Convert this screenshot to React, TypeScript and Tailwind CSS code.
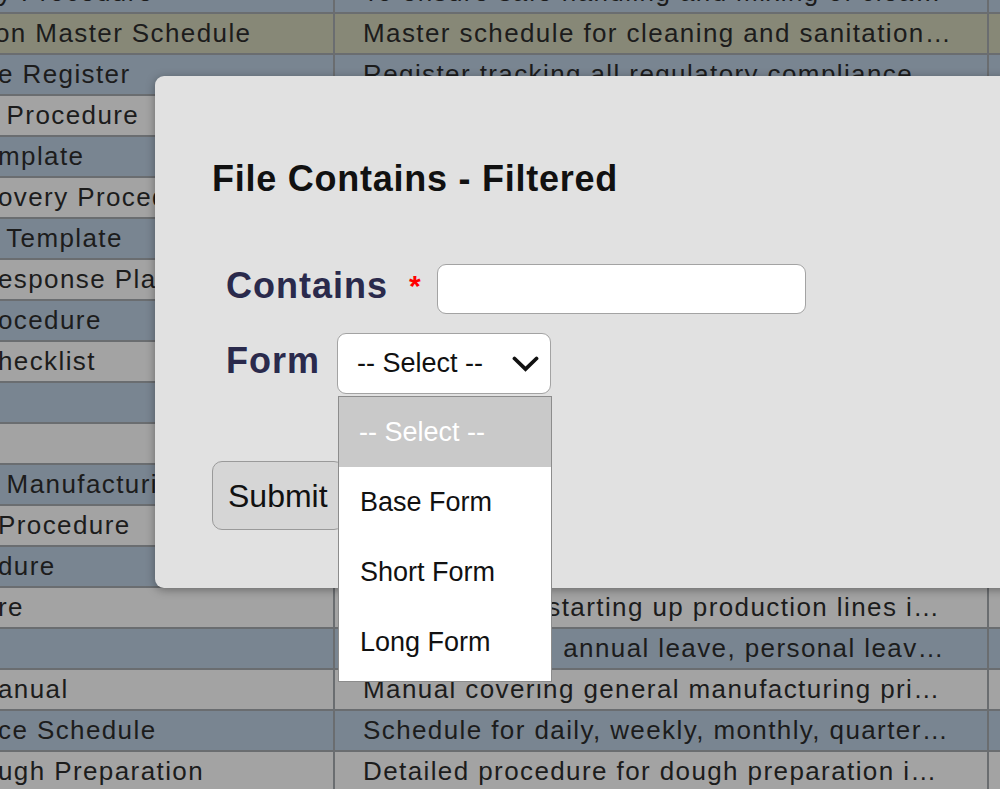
import React from 'react';

type Row = { name: string; desc: string; tone: 'blue' | 'gray' | 'olive'; cut?: string };

const rows: Row[] = [
  { name: 'y Procedure', desc: 'To ensure safe handling and mixing of cleaning chemicals', tone: 'blue' },
  { name: 'on Master Schedule', desc: 'Master schedule for cleaning and sanitation activities', tone: 'olive', cut: '-ml-[5px]' },
  { name: 'e Register', desc: 'Register tracking all regulatory compliance requirements', tone: 'blue' },
  { name: ' Procedure', desc: 'Procedure for allergen control and segregation', tone: 'gray' },
  { name: 'mplate', desc: 'Template for recording daily production checks', tone: 'blue' },
  { name: 'overy Procedure', desc: 'Procedure for recovery after system failure', tone: 'gray' },
  { name: ' Template', desc: 'Template for supplier approval records', tone: 'blue' },
  { name: 'esponse Plan', desc: 'Plan for responding to site emergencies', tone: 'gray' },
  { name: 'ocedure', desc: 'Procedure for product recall and withdrawal', tone: 'blue' },
  { name: 'hecklist', desc: 'Checklist for pre-shift hygiene inspection', tone: 'gray' },
  { name: '', desc: '', tone: 'blue' },
  { name: '', desc: '', tone: 'gray' },
  { name: ' Manufacturing', desc: 'Good manufacturing practice guidelines', tone: 'blue' },
  { name: 'Procedure', desc: 'Procedure for handling customer complaints', tone: 'gray' },
  { name: 'dure', desc: 'Procedure for calibration of equipment', tone: 'blue' },
  { name: 're', desc: 'Procedure for starting up production lines in the morning', tone: 'gray' },
  { name: '', desc: 'Rules covering annual leave, personal leave and sick leave', tone: 'blue' },
  { name: 'anual', desc: 'Manual covering general manufacturing principles', tone: 'gray' },
  { name: 'ce Schedule', desc: 'Schedule for daily, weekly, monthly, quarterly maintenance', tone: 'blue' },
  { name: 'ugh Preparation', desc: 'Detailed procedure for dough preparation in the mixing room', tone: 'gray' },
];

const toneClass = {
  blue: 'bg-[#798591]',
  gray: 'bg-[#a3a3a3]',
  olive: 'bg-[#878877]',
};

function Chevron() {
  return (
    <svg width="27" height="16" viewBox="0 0 27 16" fill="none">
      <polyline points="2.5,2.5 13.5,13 24.5,2.5" stroke="#111" strokeWidth="3.8" strokeLinecap="round" strokeLinejoin="miter" />
    </svg>
  );
}

export default function App() {
  const options = ['Base Form', 'Short Form', 'Long Form'];

  return (
    <div className="relative w-[1000px] h-[789px] overflow-hidden bg-[#a3a3a3] font-[family-name:'Liberation_Sans',Arial,sans-serif]">
      {/* table behind the dialog */}
      <div className="flex flex-col -mt-[27px] text-[26px] tracking-[1.4px] text-[#1c1c1c]">
        {rows.map((r, i) => (
          <div key={i} className={`flex h-[41px] border-b-2 border-[#6a6d70] ${toneClass[r.tone]}`}>
            <div className="w-[335px] shrink-0 border-r-2 border-[#6a6d70] flex items-center overflow-hidden">
              <span className={`whitespace-pre ${r.cut ?? '-ml-[2px]'}`}>{r.name}</span>
            </div>
            <div className="w-[654px] shrink-0 border-r-2 border-[#6a6d70] flex items-center pl-[28px] pr-[36px] min-w-0">
              <span className="truncate">{r.desc}</span>
            </div>
            <div className="flex-1" />
          </div>
        ))}
      </div>

      {/* dialog */}
      <div className="absolute left-[155px] top-[76px] w-[920px] h-[512px] rounded-[9px] bg-[#e1e1e1] shadow-[0_2px_10px_rgba(0,0,0,0.35)] pt-[82px] pl-[57px]">
        <h2 className="text-[36px] leading-[42px] font-bold tracking-[0.75px] text-[#111]">File Contains - Filtered</h2>

        <div className="mt-[64px] pl-[14px] flex flex-col gap-[19px]">
          <div className="flex items-center h-[50px]">
            <span className="mb-[6px] text-[36px] leading-[42px] font-bold tracking-[1px] text-[#2a2a4c]">Contains</span>
            <span className="ml-[21px] mb-[6px] text-[30px] leading-none font-bold text-[#ff0000]">*</span>
            <div className="ml-[16px] w-[369px] h-[50px] rounded-[9px] border-[1.5px] border-[#a3a3a3] bg-white" />
          </div>

          <div className="flex items-center h-[61px]">
            <span className="mb-[6px] text-[36px] leading-[42px] font-bold tracking-[1px] text-[#2a2a4c]">Form</span>
            <div className="relative ml-[17px]">
              <div className="w-[214px] h-[61px] rounded-[9px] border-[1.5px] border-[#a3a3a3] bg-white flex items-center justify-between pl-[19px] pr-[11px]">
                <span className="text-[27px] text-[#111]">-- Select --</span>
                <Chevron />
              </div>
              {/* open option list */}
              <div className="absolute left-[1px] top-[63px] w-[214px] border border-[#8c8c8c] bg-white pb-[4px] z-10">
                <div className="h-[70px] bg-[#c9c9c9] flex items-center pl-[20px] text-[27px] text-white">-- Select --</div>
                {options.map((o) => (
                  <div key={o} className="h-[70px] flex items-center pl-[21px] text-[27px] text-[#111]">{o}</div>
                ))}
              </div>
            </div>
          </div>
        </div>

        <button className="mt-[67px] h-[69px] px-[15px] rounded-[10px] border-[1.5px] border-[#9a9a9a] bg-[#d6d6d6] text-[32px] text-[#111]">
          Submit
        </button>
      </div>
    </div>
  );
}
